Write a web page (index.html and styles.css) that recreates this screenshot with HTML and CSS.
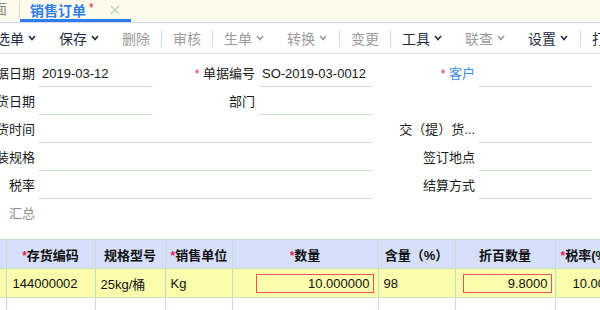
FILE: index.html
```html
<!DOCTYPE html>
<html lang="zh-CN">

<head>
    <meta charset="UTF-8">
    <meta name="viewport" content="width=device-width, initial-scale=1.0">
    <title>销售订单</title>
    <link rel="stylesheet" href="styles.css">
</head>

<body>
    <div class="tabs">
        <span class="tab-prev">面</span>
        <span class="tab-sep"></span>
        <div class="tab active">
            <span class="tab-title">销售订单</span>
            <span class="tab-dirty">*</span>
            <svg class="tab-close" viewBox="0 0 10 10"><path d="M1 1L9 9M9 1L1 9" /></svg>
        </div>
    </div>

    <div class="toolbar">
        <span class="tool">选单<svg class="caret" viewBox="0 0 8 6"><polyline points="1,1 4,4.5 7,1" /></svg></span>
        <span class="tool">保存<svg class="caret" viewBox="0 0 8 6"><polyline points="1,1 4,4.5 7,1" /></svg></span>
        <span class="tool off">删除</span>
        <span class="tool-sep"></span>
        <span class="tool off">审核</span>
        <span class="tool-sep"></span>
        <span class="tool off">生单<svg class="caret" viewBox="0 0 8 6"><polyline points="1,1 4,4.5 7,1" /></svg></span>
        <span class="tool off">转换<svg class="caret" viewBox="0 0 8 6"><polyline points="1,1 4,4.5 7,1" /></svg></span>
        <span class="tool-sep"></span>
        <span class="tool off">变更</span>
        <span class="tool-sep"></span>
        <span class="tool">工具<svg class="caret" viewBox="0 0 8 6"><polyline points="1,1 4,4.5 7,1" /></svg></span>
        <span class="tool off">联查<svg class="caret" viewBox="0 0 8 6"><polyline points="1,1 4,4.5 7,1" /></svg></span>
        <span class="tool">设置<svg class="caret" viewBox="0 0 8 6"><polyline points="1,1 4,4.5 7,1" /></svg></span>
        <span class="tool-sep"></span>
        <span class="tool">打印</span>
    </div>

    <div class="form-view">
        <div class="form">
            <label class="label">单据日期</label>
            <div class="field">2019-03-12</div>
            <label class="label"><span class="req">*</span> 单据编号</label>
            <div class="field">SO-2019-03-0012</div>
            <label class="label link"><span class="req">*</span> 客户</label>
            <div class="field"></div>

            <label class="label">交货日期</label>
            <div class="field"></div>
            <label class="label">部门</label>
            <div class="field"></div>
            <span></span>
            <span></span>

            <label class="label">交货时间</label>
            <div class="field wide"></div>
            <label class="label">交（提）货...</label>
            <div class="field"></div>

            <label class="label">包装规格</label>
            <div class="field wide"></div>
            <label class="label">签订地点</label>
            <div class="field"></div>

            <label class="label">税率</label>
            <div class="field wide"></div>
            <label class="label">结算方式</label>
            <div class="field"></div>

            <label class="label muted">汇总</label>
        </div>
    </div>

    <div class="grid-view">
        <table class="grid">
            <colgroup>
                <col style="width: 6px">
                <col style="width: 89px">
                <col style="width: 70px">
                <col style="width: 67px">
                <col style="width: 146px">
                <col style="width: 77px">
                <col style="width: 100px">
                <col style="width: 125px">
            </colgroup>
            <thead>
                <tr>
                    <th class="edge"></th>
                    <th><span class="req">*</span>存货编码</th>
                    <th>规格型号</th>
                    <th><span class="req">*</span>销售单位</th>
                    <th><span class="req">*</span>数量</th>
                    <th>含量（%）</th>
                    <th>折百数量</th>
                    <th class="left"><span class="req">*</span>税率(%)</th>
                </tr>
            </thead>
            <tbody>
                <tr class="current">
                    <td class="edge"></td>
                    <td>144000002</td>
                    <td>25kg/桶</td>
                    <td>Kg</td>
                    <td class="boxed"><div class="cell-input qty">10.000000</div></td>
                    <td>98</td>
                    <td class="boxed"><div class="cell-input pct">9.8000</div></td>
                    <td class="rate">10.00</td>
                </tr>
                <tr>
                    <td class="edge"></td>
                    <td></td>
                    <td></td>
                    <td></td>
                    <td></td>
                    <td></td>
                    <td></td>
                    <td></td>
                </tr>
            </tbody>
        </table>
    </div>
</body>

</html>
```

FILE: styles.css
```css
body {
    margin: 0;
    width: 600px;
    height: 310px;
    overflow: hidden;
    background: #fff;
    color: #1a1a1a;
    font-family: "Liberation Sans", "Noto Sans CJK SC", sans-serif;
    font-size: 13px;
}

/* tab strip */
.tabs {
    display: flex;
    height: 22px;
    background: #fffaec;
    white-space: nowrap;
}

.tab-prev {
    flex-shrink: 0;
    width: 14px;
    margin-left: -7px;
    margin-right: 12px;
    line-height: 19px;
    font-size: 14px;
    color: #8a8a8a;
}

.tab-sep {
    flex-shrink: 0;
    width: 1px;
    margin: 2px 0 4px;
    background: #d3dbec;
}

.tab {
    display: flex;
    align-items: center;
    flex-shrink: 0;
    height: 19px;
    padding: 0 11px 0 10px;
    border-bottom: 3px solid #2f7de8;
}

.tab-title {
    font-size: 14px;
    font-weight: bold;
    color: #2f7de8;
}

.tab-dirty {
    align-self: flex-start;
    margin: 1px 0 0 3px;
    font-size: 12px;
    color: #e31b1b;
}

.tab-close {
    width: 10px;
    height: 10px;
    margin-left: 16px;
    fill: none;
    stroke: #b9d4b9;
    stroke-width: 1.3;
}

/* toolbar */
.toolbar {
    display: flex;
    align-items: center;
    height: 30px;
    margin-left: -15px;
    border-top: 1px solid #cdd7f6;
    border-bottom: 1px solid #e5d8f6;
    white-space: nowrap;
}

.tool {
    display: flex;
    align-items: center;
    flex-shrink: 0;
    padding: 0 11px;
    font-size: 14px;
    color: #1f2c46;
}

.tool.off {
    color: #9b9b9b;
}

.caret {
    width: 8px;
    height: 6px;
    margin: 0 1px 0 4px;
    fill: none;
    stroke: currentColor;
    stroke-width: 1.6;
}

.tool-sep {
    flex-shrink: 0;
    width: 1px;
    height: 17px;
    background: #cdd9f3;
}

/* header form */
.form-view {
    overflow: hidden;
    padding-top: 8px;
}

.form {
    display: grid;
    grid-template-columns: 107px 113px 107px 113px 107px 113px;
    grid-auto-rows: 28px;
    margin-left: -68px;
}

.label {
    height: 24px;
    padding-right: 4px;
    line-height: 24px;
    text-align: right;
    white-space: nowrap;
    color: #1a1a1a;
}

.label.link {
    color: #3a8be6;
}

.label.muted {
    color: #8c8c8c;
}

.req {
    font-size: 12px;
    color: #e0245e;
}

.field {
    box-sizing: border-box;
    height: 25px;
    padding-left: 3px;
    line-height: 24px;
    border-bottom: 1px solid #c8dfca;
}

.field.wide {
    grid-column: span 3;
}

/* detail grid */
.grid-view {
    overflow: hidden;
    margin-top: 9px;
}

.grid {
    width: 680px;
    border-collapse: collapse;
    table-layout: fixed;
}

.grid th,
.grid td {
    padding: 0 5px;
    border: 1px solid #c6dfc9;
    white-space: nowrap;
    overflow: hidden;
}

.grid th {
    height: 28px;
    background: #d6e0fb;
    font-weight: bold;
    text-align: center;
    color: #111;
}

.grid th.left {
    text-align: left;
}

.grid td {
    height: 28px;
    color: #111;
}

.grid .edge {
    padding: 0;
    border-left: none;
}

.grid tr.current td {
    background: #fcfdac;
}

.grid td:nth-child(2) {
    padding-left: 6px;
}

.grid td.boxed {
    padding: 0;
}

.grid td.rate {
    padding-left: 17px;
}

.cell-input {
    box-sizing: border-box;
    height: 19px;
    padding-right: 3px;
    line-height: 17px;
    text-align: right;
    border: 1px solid #e8505a;
}

.cell-input.qty {
    margin: 0 4px 0 23px;
}

.cell-input.pct {
    margin: 0 3px 0 7px;
}
```
